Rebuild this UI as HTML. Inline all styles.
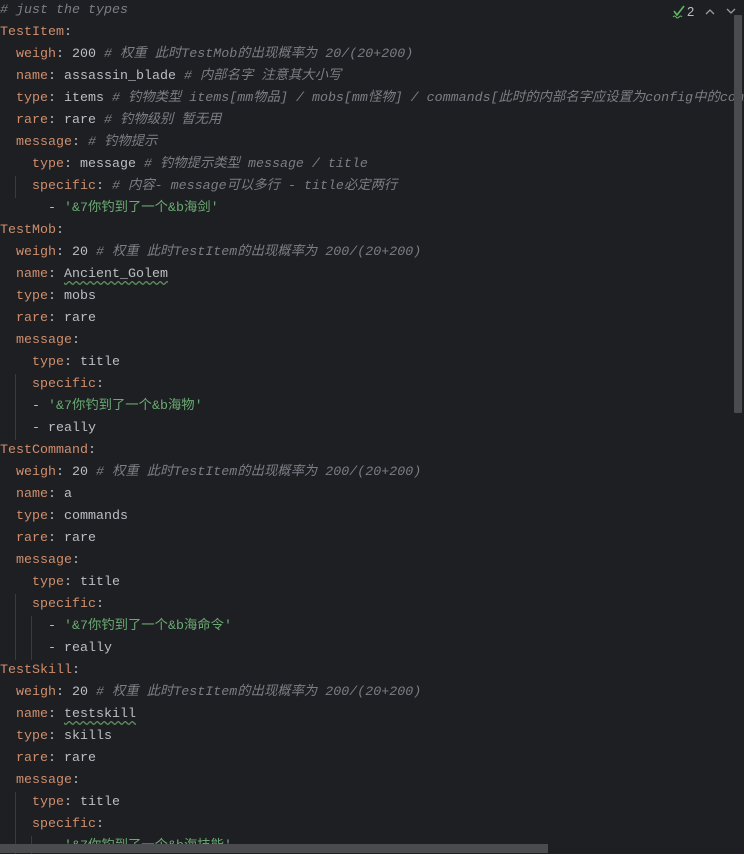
<!DOCTYPE html>
<html><head><meta charset="utf-8"><style>
html,body{margin:0;padding:0;background:#1e1f22;width:744px;height:854px;overflow:hidden;position:relative}
.code{position:absolute;left:0;top:0;width:744px;height:854px;overflow:hidden;font-family:"Liberation Mono","Noto Sans CJK SC",monospace;font-size:13.33px;line-height:22px;color:#bcbec4;white-space:pre}
.k{color:#cf8e6d}.c{color:#7a7e85;font-style:italic}.s{color:#6aab73}
.g{position:absolute;width:1px;background:#393b40}
.u{text-decoration:underline wavy #5f8f5f;text-underline-offset:3px}
</style></head><body>
<div class="g" style="left:15px;top:176px;height:22px"></div>
<div class="g" style="left:15px;top:374px;height:66px"></div>
<div class="g" style="left:15px;top:594px;height:66px"></div>
<div class="g" style="left:31px;top:616px;height:44px"></div>
<div class="g" style="left:15px;top:792px;height:62px"></div>
<div class="g" style="left:31px;top:836px;height:18px"></div>
<div class="code"><span class="c"># just the types</span>
<span class="k">TestItem</span>:
  <span class="k">weigh</span>: 200 <span class="c"># 权重 此时TestMob的出现概率为 20/(20+200)</span>
  <span class="k">name</span>: assassin_blade <span class="c"># 内部名字 注意其大小写</span>
  <span class="k">type</span>: items <span class="c"># 钓物类型 items[mm物品] / mobs[mm怪物] / commands[此时的内部名字应设置为config中的commands</span>
  <span class="k">rare</span>: rare <span class="c"># 钓物级别 暂无用</span>
  <span class="k">message</span>: <span class="c"># 钓物提示</span>
    <span class="k">type</span>: message <span class="c"># 钓物提示类型 message / title</span>
    <span class="k">specific</span>: <span class="c"># 内容- message可以多行 - title必定两行</span>
      - <span class="s">'&amp;7你钓到了一个&amp;b海剑'</span>
<span class="k">TestMob</span>:
  <span class="k">weigh</span>: 20 <span class="c"># 权重 此时TestItem的出现概率为 200/(20+200)</span>
  <span class="k">name</span>: <span class="u">Ancient_Golem</span>
  <span class="k">type</span>: mobs
  <span class="k">rare</span>: rare
  <span class="k">message</span>:
    <span class="k">type</span>: title
    <span class="k">specific</span>:
    - <span class="s">'&amp;7你钓到了一个&amp;b海物'</span>
    - really
<span class="k">TestCommand</span>:
  <span class="k">weigh</span>: 20 <span class="c"># 权重 此时TestItem的出现概率为 200/(20+200)</span>
  <span class="k">name</span>: a
  <span class="k">type</span>: commands
  <span class="k">rare</span>: rare
  <span class="k">message</span>:
    <span class="k">type</span>: title
    <span class="k">specific</span>:
      - <span class="s">'&amp;7你钓到了一个&amp;b海命令'</span>
      - really
<span class="k">TestSkill</span>:
  <span class="k">weigh</span>: 20 <span class="c"># 权重 此时TestItem的出现概率为 200/(20+200)</span>
  <span class="k">name</span>: <span class="u">testskill</span>
  <span class="k">type</span>: skills
  <span class="k">rare</span>: rare
  <span class="k">message</span>:
    <span class="k">type</span>: title
    <span class="k">specific</span>:
      - <span class="s">'&amp;7你钓到了一个&amp;b海技能'</span></div>
<div style="position:absolute;left:660px;top:0;width:84px;height:22px;background:#1e1f22"></div>
<svg style="position:absolute;left:672px;top:3px" width="72" height="16">
<path d="M2 8l3 4 7-9" stroke="#5fb865" stroke-width="1.6" fill="none"/>
<path d="M1 14q2-2 3 0t3 0 3 0" stroke="#5fb865" stroke-width="1" fill="none"/>
<text x="15" y="13" fill="#bcbec4" font-family="Liberation Sans" font-size="13">2</text>
<path d="M34 11l4-4 4 4" stroke="#9a9ca2" stroke-width="1.3" fill="none"/>
<path d="M55 6l4 4 4-4" stroke="#9a9ca2" stroke-width="1.3" fill="none"/>
</svg>
<div style="position:absolute;left:734px;top:15px;width:8px;height:398px;background:#4a4b4f;border-radius:1px"></div>
<div style="position:absolute;left:0;top:844px;width:548px;height:9px;background:#4a4b4f"></div>
</body></html>
